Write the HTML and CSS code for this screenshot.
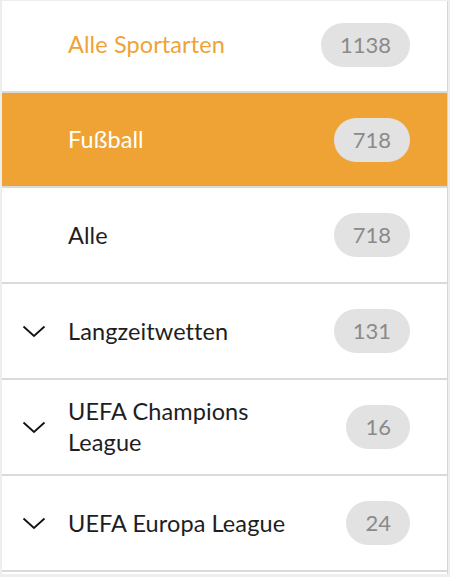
FILE: index.html
```html
<!DOCTYPE html>
<html lang="de">
<head>
<meta charset="utf-8">
<link rel="stylesheet" href="styles.css">
</head>
<body>
<div class="panel">
  <div class="row row-first">
    <span class="icon"></span>
    <span class="label label-accent">Alle Sportarten</span>
    <span class="badge">1138</span>
  </div>
  <div class="row row-active">
    <span class="icon"></span>
    <span class="label">Fußball</span>
    <span class="badge">718</span>
  </div>
  <div class="row">
    <span class="icon"></span>
    <span class="label">Alle</span>
    <span class="badge">718</span>
  </div>
  <div class="row">
    <span class="icon"><svg viewBox="0 0 24 12" width="24" height="12"><path d="M1.5 1.5 L12 11 L22.5 1.5" fill="none" stroke="#111" stroke-width="1.8"/></svg></span>
    <span class="label">Langzeitwetten</span>
    <span class="badge">131</span>
  </div>
  <div class="row">
    <span class="icon"><svg viewBox="0 0 24 12" width="24" height="12"><path d="M1.5 1.5 L12 11 L22.5 1.5" fill="none" stroke="#111" stroke-width="1.8"/></svg></span>
    <span class="label">UEFA Champions League</span>
    <span class="badge">16</span>
  </div>
  <div class="row">
    <span class="icon"><svg viewBox="0 0 24 12" width="24" height="12"><path d="M1.5 1.5 L12 11 L22.5 1.5" fill="none" stroke="#111" stroke-width="1.8"/></svg></span>
    <span class="label">UEFA Europa League</span>
    <span class="badge">24</span>
  </div>
  <div class="tail"></div>
</div>
</body>
</html>
```
FILE: styles.css
```css
html, body {
  margin: 0;
  padding: 0;
}
body {
  background: #eeeeee;
  font-family: "Lato", "Noto Sans", sans-serif;
  width: 450px;
  height: 577px;
  overflow: hidden;
}
.panel {
  margin: 1px 0 0 2px;
  width: 445px;
  background: #ffffff;
  border-right: 1px solid #d6d6d6;
}
.row {
  display: flex;
  align-items: center;
  height: 94px;
  box-sizing: content-box;
  padding: 0 37px 0 20px;
  border-bottom: 2px solid #dadada;
  font-size: 23.5px;
  color: #1e1e1e;
}
.row-first {
  height: 87px;
  padding-bottom: 3px;
}
.row-active {
  height: 93px;
  background: #efa334;
  color: #ffffff;
}
.icon {
  width: 24px;
  height: 12px;
  flex: none;
  margin-right: 22px;
  display: flex;
}
.label {
  flex: 1;
  max-width: 232px;
  line-height: 31px;
  letter-spacing: 0.1px;
}
.label-accent {
  color: #efa336;
}
.badge {
  margin-left: auto;
  flex: none;
  height: 44px;
  line-height: 44px;
  padding: 0 19px;
  border-radius: 22px;
  background: #e2e2e2;
  color: #8a8a8a;
  font-size: 22px;
}
.tail {
  height: 2px;
}
```
